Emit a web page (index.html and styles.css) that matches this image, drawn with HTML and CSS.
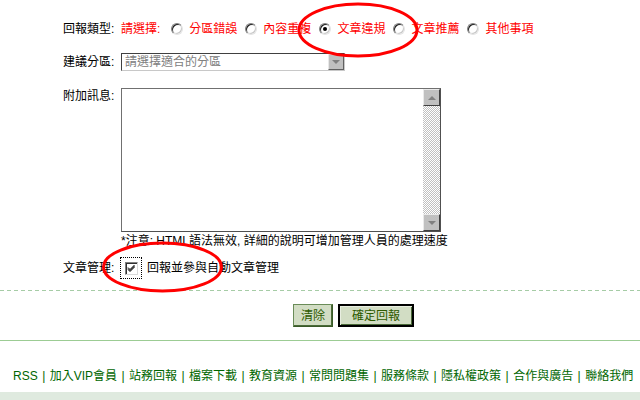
FILE: index.html
```html
<!DOCTYPE html>
<html lang="zh-Hant">
<head>
<meta charset="utf-8">
<title>回報</title>
<link rel="stylesheet" href="styles.css">
</head>
<body>
<div class="page">
  <div class="form">
    <div class="row row-type">
      <span class="label">回報類型:</span>
      <span class="choices">
        <span class="prompt">請選擇:</span>
        <span class="opt"><i class="radio"></i>分區錯誤</span>
        <span class="opt"><i class="radio"></i>內容重複</span>
        <span class="opt"><i class="radio checked"></i>文章違規</span>
        <span class="opt"><i class="radio"></i>文章推薦</span>
        <span class="opt"><i class="radio"></i>其他事項</span>
      </span>
    </div>
    <div class="row row-zone">
      <span class="label">建議分區:</span>
      <span class="select">
        <span class="select-text">請選擇適合的分區</span>
        <span class="select-btn"><i class="arrow-down"></i></span>
      </span>
    </div>
    <div class="row row-msg">
      <span class="label">附加訊息:</span>
      <span class="textarea">
        <span class="scroll">
          <span class="sbtn"><i class="arrow-up"></i></span>
          <span class="track"></span>
          <span class="sbtn"><i class="arrow-down"></i></span>
        </span>
      </span>
    </div>
    <div class="note">*注意: HTML語法無效, 詳細的說明可增加管理人員的處理速度</div>
    <div class="row row-manage">
      <span class="label">文章管理:</span>
      <span class="cb-wrap"><span class="checkbox"><svg width="9" height="9" viewBox="0 0 9 9"><path d="M1 3.5 L3 5.5 L7.5 1 M1 4.5 L3 6.5 L7.5 2 M1 5.5 L3 7.5 L7.5 3" stroke="#000" stroke-width="1" fill="none"/></svg></span></span>
      <span class="cb-text">回報並參與自動文章管理</span>
    </div>
  </div>
  <div class="dash"></div>
  <div class="buttons">
    <span class="btn">清除</span>
    <span class="btn btn-default">確定回報</span>
  </div>
  <div class="greenline"></div>
  <div class="footer">
    <span>RSS</span><span class="sep">|</span><span>加入VIP會員</span><span class="sep">|</span><span>站務回報</span><span class="sep">|</span><span>檔案下載</span><span class="sep">|</span><span>教育資源</span><span class="sep">|</span><span>常問問題集</span><span class="sep">|</span><span>服務條款</span><span class="sep">|</span><span>隱私權政策</span><span class="sep">|</span><span>合作與廣告</span><span class="sep">|</span><span>聯絡我們</span>
  </div>
  <div class="band"></div>
  <svg class="marks" width="640" height="400" viewBox="0 0 640 400">
    <ellipse cx="358" cy="30" rx="59" ry="26" fill="none" stroke="#f00" stroke-width="3"/>
    <ellipse cx="162.5" cy="267" rx="59" ry="24" fill="none" stroke="#f00" stroke-width="3"/>
  </svg>
</div>
</body>
</html>
```
FILE: styles.css
```css
* { box-sizing: border-box; }
html, body { margin: 0; padding: 0; background: #fff; }
body {
  font-family: "Liberation Sans", "Noto Sans CJK TC", sans-serif;
  font-size: 12px;
  line-height: 16px;
  color: #000;
}
.page { position: relative; width: 640px; height: 400px; overflow: hidden; }

.form { padding: 21px 0 0 63px; }
.row { display: flex; }
.label { width: 58px; flex: none; }

.row-type { height: 16px; align-items: center; }
.choices { display: flex; align-items: center; color: #f00; }
.prompt { margin-right: 3px; }
.opt { display: flex; align-items: center; }
.radio {
  display: block;
  width: 12px; height: 12px;
  margin: 0 6px 0 8px;
  border-radius: 50%;
  border: 1px solid;
  border-color: #808080 #e4e4e4 #e4e4e4 #808080;
  box-shadow: inset 1px 1px 0 #202020, inset -1px -1px 0 #c8c8c8;
  background: #fff;
  position: relative;
}
.radio.checked::after {
  content: "";
  position: absolute;
  left: 3px; top: 3px;
  width: 4px; height: 4px;
  border-radius: 50%;
  background: #000;
}

.row-zone { margin-top: 16px; height: 18px; align-items: center; }
.select {
  display: flex;
  width: 224px; height: 18px;
  border: 1px solid;
  border-color: #404040 #c8c8c8 #c8c8c8 #404040;
  background: #fff;
  padding: 0 0 0 0;
}
.select-text { flex: 1; color: #808080; padding-left: 3px; line-height: 16px; }
.select-btn {
  width: 16px; height: 16px;
  background: #c0c0c0;
  border: 1px solid;
  border-color: #e8e8e8 #606060 #606060 #e8e8e8;
  display: flex; align-items: center; justify-content: center;
}
.arrow-down, .arrow-up { display: block; width: 0; height: 0; border-left: 4px solid transparent; border-right: 4px solid transparent; }
.arrow-down { border-top: 4px solid #808080; }
.arrow-up { border-bottom: 4px solid #808080; }

.row-msg { margin-top: 17px; align-items: flex-start; }
.textarea {
  display: flex;
  justify-content: flex-end;
  width: 320px; height: 144px;
  border: 1px solid;
  border-color: #707070 #505050 #505050 #707070;
  background: #fff;
}
.scroll {
  display: flex;
  flex-direction: column;
  width: 17px;
  background: repeating-conic-gradient(#c0c0c0 0 25%, #fff 0 50%) 0 0 / 2px 2px;
}
.sbtn {
  height: 17px;
  background: #c0c0c0;
  border: 1px solid;
  border-color: #eaeaea #404040 #404040 #eaeaea;
  display: flex; align-items: center; justify-content: center;
}
.track { flex: 1; }

.note { margin: 1px 0 0 58px; }

.row-manage { margin-top: 8px; height: 22px; align-items: center; }
.cb-wrap {
  width: 22px; height: 22px;
  margin-left: -1px;
  border: 1px dotted #000;
  display: flex; align-items: center; justify-content: center;
}
.checkbox {
  width: 13px; height: 13px;
  border: 1px solid;
  border-color: #808080 #d8d8d8 #d8d8d8 #808080;
  box-shadow: inset 1px 1px 0 #303030;
  background: #fff;
  display: flex; align-items: center; justify-content: center;
  padding: 1px 0 0 1px;
}
.checkbox svg { display: block; }
.cb-text { margin-left: 5px; }

.dash {
  margin-top: 11px;
  height: 1px;
  background: repeating-linear-gradient(90deg, #a6cca6 0 4px, transparent 4px 7px);
}

.buttons { display: flex; gap: 5px; margin: 13px 0 0 293px; }
.btn {
  display: flex; align-items: center; justify-content: center;
  height: 23px;
  padding: 0 7px;
  background: #d2ddc4;
  color: #2e5a00;
  border: 1px solid;
  border-color: #6a8c58 #3a5a28 #3a5a28 #6a8c58;
  box-shadow: inset -1px -1px 0 #4a6a38;
}
.btn-default {
  width: 76px;
  border: 2px solid #000;
  box-shadow: inset 1px 1px 0 #e8eee0, inset -1px -1px 0 #4a6a38;
}

.greenline { margin-top: 13px; height: 1px; background: #9ccc94; }

.footer {
  display: flex;
  margin-top: 27px;
  padding-left: 13px;
  color: #006600;
  white-space: nowrap;
}
.sep { width: 12px; text-align: center; }

.band { margin-top: 8px; height: 8px; background: #dfeadf; }

.marks { position: absolute; left: 0; top: 0; pointer-events: none; }
```
